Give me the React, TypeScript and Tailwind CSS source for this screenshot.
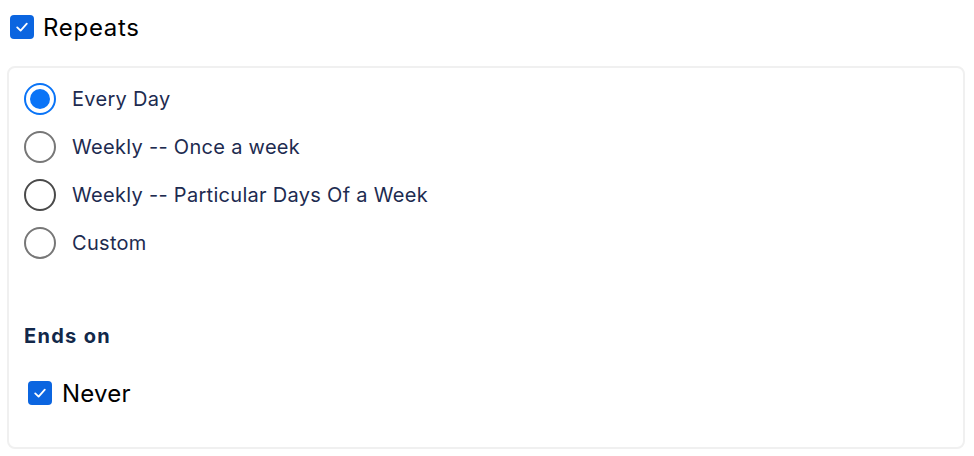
import React from "react";

function Check({ className = "" }: { className?: string }) {
  return (
    <span className={`flex h-6 w-6 items-center justify-center rounded-[4px] bg-[#0b65e0] ${className}`}>
      <svg width="16" height="16" viewBox="0 0 16 16" fill="none">
        <path d="M3.2 8.4 L6.6 11.6 L12.8 4.6" stroke="white" strokeWidth="1.8" strokeLinecap="round" strokeLinejoin="round" />
      </svg>
    </span>
  );
}

function Radio({ checked, dark }: { checked?: boolean; dark?: boolean }) {
  if (checked) {
    return (
      <span className="flex h-8 w-8 shrink-0 items-center justify-center rounded-full border-2 border-[#0a74f7]">
        <span className="h-5 w-5 rounded-full bg-[#0a74f7]" />
      </span>
    );
  }
  return (
    <span
      className={`h-8 w-8 shrink-0 rounded-full border-2 ${dark ? "border-[#4a4a4a]" : "border-[#777777]"}`}
    />
  );
}

export default function App() {
  const options = [
    { label: "Every Day", checked: true },
    { label: "Weekly -- Once a week" },
    { label: "Weekly -- Particular Days Of a Week", dark: true },
    { label: "Custom" },
  ];
  return (
    <div className="h-[456px] w-[974px] bg-white" style={{ fontFamily: "Inter, 'Noto Sans', sans-serif" }}>
      <div className="flex h-[26px] items-center gap-[9px] pl-[10px] pt-[14px] box-content">
        <Check />
        <span className="pt-[2px] text-[24px] leading-6 tracking-[0.7px] text-black">Repeats</span>
      </div>
      <div className="ml-[7px] mt-[26px] h-[383px] w-[958px] rounded-lg border-2 border-[#f0f0f0] pl-[15px] pt-[7px]">
        {options.map((o) => (
          <div key={o.label} className="flex h-12 items-center gap-4">
            <Radio checked={o.checked} dark={o.dark} />
            <span className="text-[20px] tracking-[0.3px] text-[#1d2b50]">{o.label}</span>
          </div>
        ))}
        <div className="mt-[55px] h-7 text-[20px] font-bold leading-7 tracking-[1.3px] text-[#12284a]">Ends on</div>
        <div className="ml-1 mt-[27px] flex h-8 items-center gap-[10px]">
          <Check />
          <span className="pt-[2px] text-[24px] tracking-[0.2px] text-black">Never</span>
        </div>
      </div>
    </div>
  );
}
